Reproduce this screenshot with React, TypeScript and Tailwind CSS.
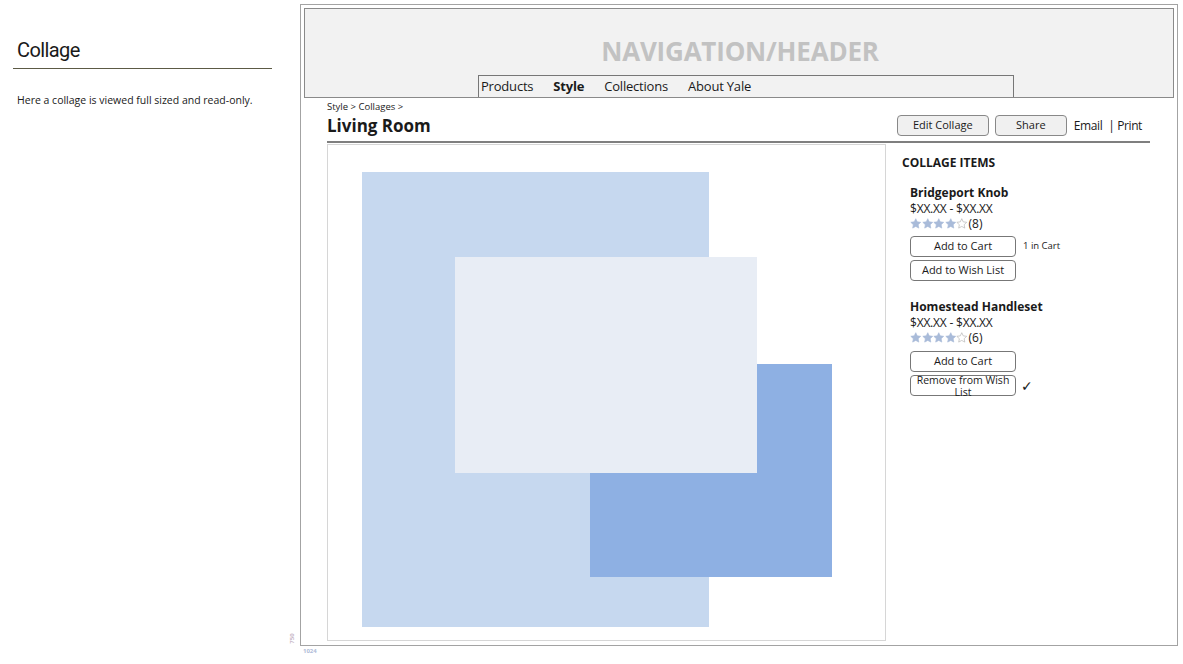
export default function App() {
  const font = { fontFamily: '"Open Sans", "DejaVu Sans", sans-serif' }
  return (
    <div className="flex h-[664px] w-[1183px] bg-white text-[#1a1a1a]" style={font}>
      {/* sidebar notes */}
      <div className="w-[300px] shrink-0 pl-[13px] pt-[37px]">
        <div className="w-[259px] border-b border-[#5c5a45] pb-[5px] pl-[4px]">
          <h1 className="text-[20px] leading-[26px] tracking-[-0.6px] text-[#1a1a1a]" style={{ fontFamily: 'Roboto, "Liberation Sans", sans-serif' }}>
            Collage
          </h1>
        </div>
        <p className="mt-[24px] pl-[4px] text-[10.5px] leading-[14px]">Here a collage is viewed full sized and read-only.</p>
      </div>

      {/* wireframe */}
      <div className="relative mt-[4px] flex h-[642px] w-[878px] flex-col border border-[#a3a3a3] p-[3px]">
        <div className="flex h-[90px] flex-col border border-[#8a8a8a] bg-[#f2f2f2]">
          <div className="flex flex-1 items-end justify-center pb-[9px] pl-[2px] text-[26px] font-bold leading-[30px] tracking-[-0.2px] text-[#c2c2c2]">
            NAVIGATION/HEADER
          </div>
          <div className="ml-[173px] flex h-[22px] w-[536px] items-center gap-[20px] border-l border-r border-t border-[#777] pl-[2px] text-[13px] tracking-[-0.2px]">
            <span>Products</span>
            <span className="font-bold">Style</span>
            <span>Collections</span>
            <span>About Yale</span>
          </div>
        </div>

        <div className="flex flex-1 flex-col pl-[23px] pr-[24px]">
          <div className="mt-[3px] text-[9.5px] leading-[12px]">Style &gt; Collages &gt;</div>
          <div className="mt-[2px] flex items-end justify-between border-b-2 border-[#7f7f7f] pb-[4px]">
            <h2 className="text-[17px] font-bold leading-[22px]">Living Room</h2>
            <div className="mb-[1px] flex items-center pr-[8px]">
              <button className="h-[21px] w-[92px] rounded-[4px] border border-[#888] bg-[#f0f0f0] text-[11px]">Edit Collage</button>
              <button className="ml-[6px] h-[21px] w-[72px] rounded-[4px] border border-[#888] bg-[#f0f0f0] text-[11px]">Share</button>
              <span className="ml-[7px] text-[12px] tracking-[-0.4px]">Email</span>
              <span className="ml-[6px] text-[12px] tracking-[-0.4px]">| Print</span>
            </div>
          </div>

          <div className="mt-[1px] flex flex-1">
            <div className="relative mb-[1px] w-[559px] border border-[#d6d6d6]">
              <div className="absolute left-[34px] top-[27px] h-[455px] w-[347px] bg-[#c6d8ef]" />
              <div className="absolute left-[262px] top-[219px] h-[213px] w-[242px] bg-[#8eb0e3]" />
              <div className="absolute left-[127px] top-[112px] h-[216px] w-[302px] bg-[#e8edf5]" />
            </div>

            <div className="flex flex-col pl-[16px] pt-[11px]">
              <div className="text-[12px] font-bold leading-[16px]">COLLAGE ITEMS</div>
              <div className="mt-[14px] pl-[8px]">
                <Item name="Bridgeport Knob" count={8} />
                <div className="mt-[5px] flex h-[21px] items-center">
                  <Btn>Add to Cart</Btn>
                  <span className="ml-[7px] text-[9.5px]">1 in Cart</span>
                </div>
                <div className="mt-[3px] flex h-[21px]">
                  <Btn>Add to Wish List</Btn>
                </div>
              </div>
              <div className="mt-[18px] pl-[8px]">
                <Item name="Homestead Handleset" count={6} />
                <div className="mt-[6px] flex h-[21px]">
                  <Btn>Add to Cart</Btn>
                </div>
                <div className="mt-[3px] flex h-[21px] items-center">
                  <button className="flex h-[21px] w-[106px] flex-col items-center justify-center rounded-[4px] border border-[#777] bg-white text-[10.5px] leading-[12px]">
                    <span>Remove from Wish</span>
                    <span>List</span>
                  </button>
                  <span className="ml-[5px] text-[14px] font-bold">✓</span>
                </div>
              </div>
            </div>
          </div>
        </div>

        <span className="absolute -left-[14px] bottom-[2px] origin-center -rotate-90 text-[6px] font-bold text-[#c8b8c8]">750</span>
        <span className="absolute -bottom-[11px] left-[2px] text-[6px] font-bold text-[#b0bcd8]">1024</span>
      </div>
    </div>
  )
}

function Star({ filled }: { filled: boolean }) {
  return (
    <svg width="11.5" height="11" viewBox="0 0 24 23">
      <path
        d="M12 1.5l3.1 6.6 7.2.9-5.3 5 1.4 7.1L12 17.6l-6.4 3.5L7 14l-5.3-5 7.2-.9z"
        fill={filled ? '#a9bbd9' : 'none'}
        stroke={filled ? '#a9bbd9' : '#b4b4b4'}
        strokeWidth="1.4"
        strokeLinejoin="round"
      />
    </svg>
  )
}

function Item({ name, count }: { name: string; count: number }) {
  return (
    <div className="text-[12px] leading-[15px]">
      <div className="font-bold">{name}</div>
      <div className="mt-[1px] tracking-[-0.2px]">$XX.XX - $XX.XX</div>
      <div className="flex h-[15px] items-center">
        <Star filled />
        <Star filled />
        <Star filled />
        <Star filled />
        <Star filled={false} />
        <span className="ml-[1px]">({count})</span>
      </div>
    </div>
  )
}

function Btn({ children }: { children: string }) {
  return (
    <button className="h-[21px] w-[106px] rounded-[4px] border border-[#777] bg-white text-[11px]">
      {children}
    </button>
  )
}
